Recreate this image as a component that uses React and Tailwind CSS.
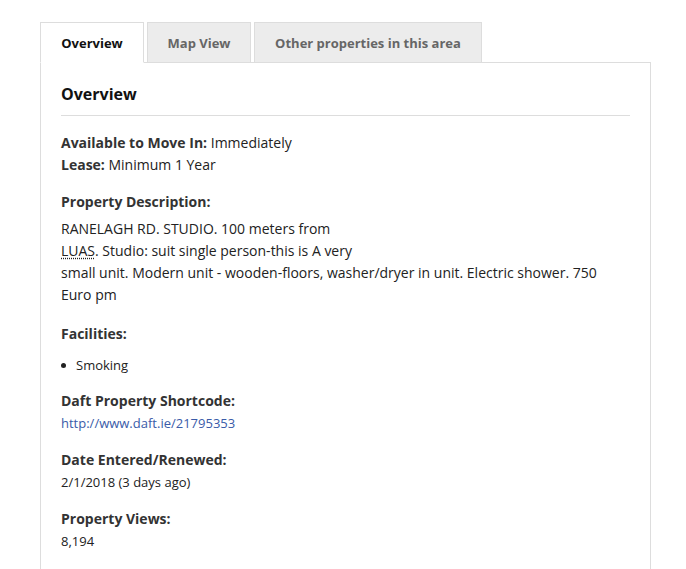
function Tab({ label, active, width }) {
    return (
        <div
            className={
                active
                    ? "relative z-10 -mb-px flex h-[41px] items-center justify-center border border-b-white border-[#dddddd] bg-white text-[13px] font-bold text-[#111]"
                    : "relative z-10 -mb-px flex h-[41px] items-center justify-center border border-[#dddddd] bg-[#ececec] text-[13px] font-bold text-[#666]"
            }
            style={{ width }}
        >
            {label}
        </div>
    )
}

function Field({ label, children, className = "" }) {
    return (
        <div className={className}>
            <div className="font-bold text-[#333]">{label}</div>
            <div className="text-[13px]">{children}</div>
        </div>
    )
}

function App() {
    return (
        <div className="min-h-[569px] bg-white pl-[40px] pt-[22px] font-['Open_Sans',sans-serif] text-[14px] leading-[22px] text-[#222]">
            <div className="flex gap-[3px]">
                <Tab label="Overview" active width={104} />
                <Tab label="Map View" width={104} />
                <Tab label="Other properties in this area" width={228} />
            </div>

            <div className="w-[611px] min-h-[508px] border border-b-0 border-[#dddddd] px-[20px] pt-[18px]">
                <h2 className="text-[16px] font-bold leading-[26px] text-[#111]">Overview</h2>
                <div className="mt-[8px] border-t border-[#dddddd]" />

                <div className="mt-[16px]">
                    <div>
                        <span className="font-bold text-[#333]">Available to Move In:</span> Immediately
                    </div>
                    <div>
                        <span className="font-bold text-[#333]">Lease:</span> Minimum 1 Year
                    </div>
                </div>

                <div className="mt-[15px]">
                    <div className="mb-[5px] font-bold text-[#333]">Property Description:</div>
                    <p>
                        RANELAGH RD. STUDIO. 100 meters from
                        <br />
                        <abbr className="underline decoration-dotted underline-offset-2">LUAS</abbr>. Studio: suit single person-this is A very
                        <br />
                        small unit. Modern unit - wooden-floors, washer/dryer in unit. Electric shower. 750
                        <br />
                        Euro pm
                    </p>
                </div>

                <div className="mt-[17px]">
                    <div className="font-bold text-[#333]">Facilities:</div>
                    <ul className="mt-[9px] text-[13px]">
                        <li className="flex items-center">
                            <span className="mr-[10px] h-[5px] w-[5px] rounded-full bg-[#222]" />
                            Smoking
                        </li>
                    </ul>
                </div>

                <Field label="Daft Property Shortcode:" className="mt-[14px]">
                    <a href="#" className="text-[#3a5ba8]">http://www.daft.ie/21795353</a>
                </Field>

                <Field label="Date Entered/Renewed:" className="mt-[15px]">
                    2/1/2018 (3 days ago)
                </Field>

                <Field label="Property Views:" className="mt-[15px]">
                    8,194
                </Field>
            </div>
        </div>
    )
}

export default App
